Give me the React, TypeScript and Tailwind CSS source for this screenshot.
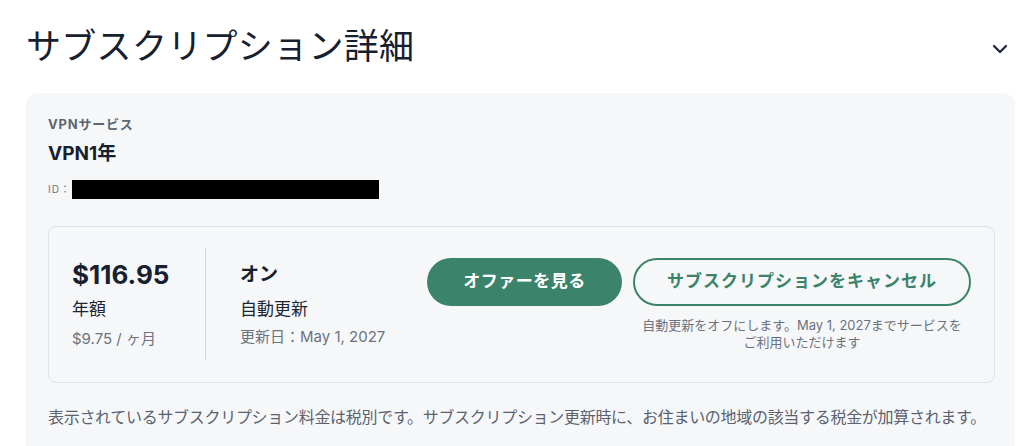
import React from "react";

const font = { fontFamily: '"Inter", "Noto Sans CJK JP", sans-serif' };

export default function App() {
  return (
    <div className="w-[1024px] h-[446px] overflow-hidden bg-white text-[#1b2533]" style={font}>
      <div className="flex items-center justify-between pl-[26px] pr-[16px] pt-[22px] h-[70px]">
        <h1 className="text-[35px] leading-[44px] font-normal tracking-[0.3px] text-[#16202e]">サブスクリプション詳細</h1>
        <svg width="16" height="10" viewBox="0 0 16 10" className="mt-[6px]">
          <path d="M2 2 L8 8 L14 2" fill="none" stroke="#1b2533" strokeWidth="2.2" strokeLinecap="round" strokeLinejoin="round" />
        </svg>
      </div>
      <div className="ml-[26px] mr-[9px] mt-[23px] bg-[#f6f7f9] rounded-t-[12px] pl-[22px] pr-[20px] pt-[23px] pb-[20px]">
        <div className="text-[13px] leading-[16px] font-bold text-[#5d6571] tracking-[0.8px]">VPNサービス</div>
        <div className="mt-[10px] text-[19px] leading-[24px] font-bold text-[#16202e]">VPN1年</div>
        <div className="mt-[13px] flex items-center h-[20px]">
          <span className="text-[10px] text-[#6b7380] tracking-[1px]">ID：</span>
          <span className="ml-[1px] w-[307px] h-[19px] bg-black"></span>
        </div>
        <div className="mt-[27px] border border-[#dfe1e5] rounded-[8px] h-[157px] flex items-start pt-[31px] pl-[23px] pr-[23px]">
          <div className="w-[133px] flex flex-col mt-[1px]">
            <div className="text-[26px] leading-[32px] font-bold text-[#16202e]">$116.95</div>
            <div className="mt-[5px] text-[17px] leading-[26px] text-[#1b2533]">年額</div>
            <div className="mt-[6px] text-[15px] leading-[22px] text-[#6b7380]">$9.75 / ヶ月</div>
          </div>
          <div className="w-px h-[112px] mt-[-10px] bg-[#d4d6da]"></div>
          <div className="flex-1 pl-[34px] flex flex-col mt-[3px]">
            <div className="text-[19px] leading-[28px] font-bold text-[#16202e]">オン</div>
            <div className="mt-[7px] text-[17px] leading-[26px] text-[#1b2533]">自動更新</div>
            <div className="mt-[4px] text-[15px] leading-[22px] text-[#6b7380]">更新日：May 1, 2027</div>
          </div>
          <div className="flex items-start gap-[11px]">
            <button className="w-[195px] h-[48px] rounded-full bg-[#3b836a] text-white text-[17px] font-bold tracking-[0.5px]">オファーを見る</button>
            <div className="flex flex-col items-center">
              <button className="w-[338px] h-[48px] rounded-full border-2 border-[#3b836a] text-[#3b836a] text-[17px] font-bold tracking-[1px]">サブスクリプションをキャンセル</button>
              <div className="mt-[11px] text-[13px] leading-[17px] text-[#6b7380] text-center">
                自動更新をオフにします。May 1, 2027までサービスを<br />ご利用いただけます
              </div>
            </div>
          </div>
        </div>
        <div className="mt-[22px] text-[16px] leading-[24px] tracking-[-0.3px] text-[#5a6270]">
          表示されているサブスクリプション料金は税別です。サブスクリプション更新時に、お住まいの地域の該当する税金が加算されます。
        </div>
      </div>
    </div>
  );
}
